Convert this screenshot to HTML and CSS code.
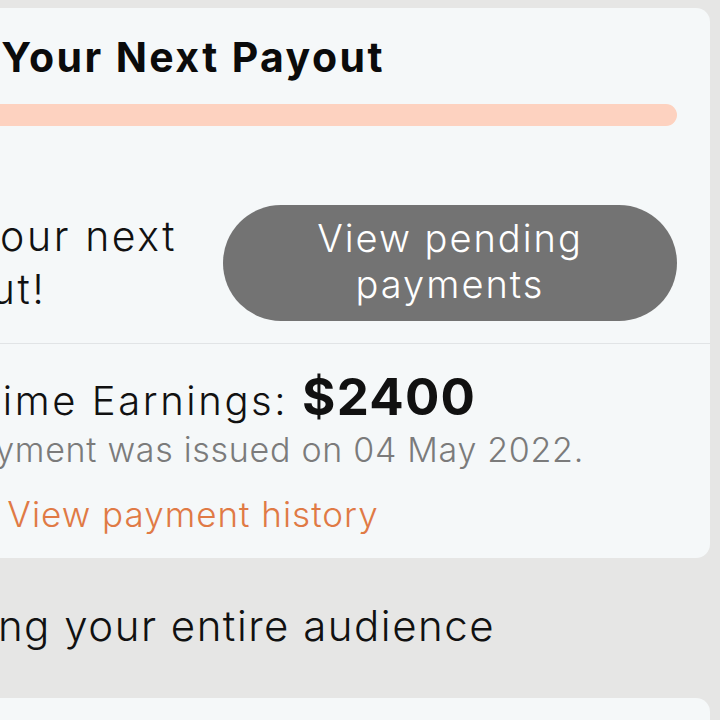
FILE: index.html
```html
<!DOCTYPE html>
<html lang="en">
<head>
  <meta charset="UTF-8" />
  <meta name="viewport" content="width=device-width, initial-scale=1.0"/>
  <title>Payouts</title>
  <link rel="stylesheet" href="styles.css">
</head>
<body>
  <div class="screen">
    <div class="card">
      <div class="card-top">
        <h2>Your Next Payout</h2>
        <div class="progress"><div class="progress-fill" style="width: 100%"></div></div>
        <div class="payout-row">
          <p class="payout-note">Get your next payout!</p>
          <button class="pending-button">View pending payments</button>
        </div>
      </div>
      <div class="card-bottom">
        <p class="earnings">Lifetime Earnings: <strong>$2400</strong></p>
        <p class="last-payment">Your last payment was issued on 04 May 2022.</p>
        <a class="history-link" href="#">View payment history</a>
      </div>
    </div>

    <div class="section-label">Reaching your entire audience</div>

    <div class="card card-next"></div>
  </div>
</body>
</html>
```

FILE: styles.css
```css
* {
  box-sizing: border-box;
}
body {
  margin: 0;
  font-family: Inter, "Noto Sans", sans-serif;
  font-weight: 300;
  background: #e6e6e5;
  color: #111;
  overflow: hidden;
  height: 720px;
}

.screen {
  width: 1054px;
  margin-left: -334px;
  padding: 8px 10px 0;
}

.card {
  background: #f5f8f9;
  border-radius: 14px;
  text-align: center;
}

.card-top {
  padding: 24px 33px 22px;
}

.card-top h2 {
  margin: 0;
  font-size: 41px;
  line-height: 50px;
  font-weight: 700;
  letter-spacing: 2.4px;
  color: #0b0b0b;
}

.progress {
  margin-top: 22px;
  height: 22px;
  border-radius: 11px;
  background: #fde3d6;
  overflow: hidden;
}

.progress-fill {
  height: 100%;
  background: #fdd2c0;
  border-radius: 11px;
}

.payout-row {
  display: flex;
  align-items: center;
  justify-content: flex-end;
  gap: 30px;
  margin-top: 79px;
}

.payout-note {
  margin: 0;
  width: 306px;
  text-align: left;
  font-size: 41px;
  line-height: 53px;
  letter-spacing: 2.6px;
  color: #111;
}

.pending-button {
  width: 454px;
  height: 116px;
  border: none;
  border-radius: 58px;
  background: #737373;
  color: #fff;
  font-family: inherit;
  font-weight: 300;
  font-size: 38px;
  line-height: 46px;
  letter-spacing: 2px;
  padding: 0 60px 4px;
}

.card-bottom {
  border-top: 1px solid #e1e4e6;
  padding: 27px 33px 22px;
}

.earnings {
  margin: 0;
  font-size: 40px;
  line-height: 52px;
  letter-spacing: 2.6px;
}

.earnings strong {
  font-size: 51px;
  font-weight: 700;
  letter-spacing: 1.2px;
}

.last-payment {
  margin: 1px 0 0;
  font-size: 34px;
  line-height: 44px;
  letter-spacing: 0.7px;
  color: #7b7b7b;
}

.history-link {
  display: inline-block;
  margin-top: 20px;
  font-size: 35px;
  line-height: 44px;
  letter-spacing: 1px;
  color: #e07a45;
  text-decoration: none;
}

.section-label {
  font-size: 42px;
  line-height: 52px;
  letter-spacing: 1.5px;
  padding: 42px 34px 0 0;
  height: 140px;
  text-align: center;
  color: #111;
}

.card-next {
  height: 80px;
  border-radius: 14px 14px 0 0;
}
```
